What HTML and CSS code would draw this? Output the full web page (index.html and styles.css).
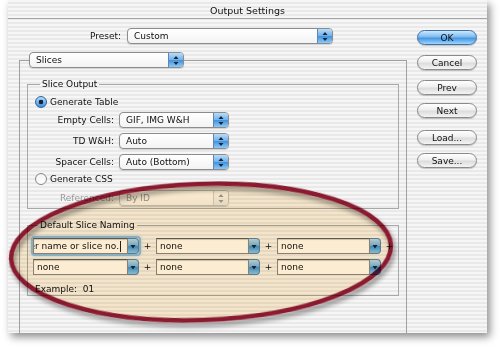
FILE: index.html
```html
<!DOCTYPE html>
<html lang="en">
<head>
    <meta charset="UTF-8">
    <title>Output Settings</title>
    <link rel="stylesheet" href="styles.css">
</head>
<body>

    <div class="window">
        <div class="titlebar">Output Settings</div>

        <div class="content">
            <div class="main">
                <!-- preset -->
                <div class="preset-row">
                    <span class="preset-label">Preset:</span>
                    <div class="popup preset-popup">
                        <span class="popup-text">Custom</span>
                        <span class="popup-arrows"><svg width="14" height="15" viewBox="0 0 14 15"><polygon points="4.5,6 9.5,6 7,3"/><polygon points="4.5,9 9.5,9 7,12"/></svg></span>
                    </div>
                </div>

                <div class="panel">
                    <div class="popup slices-popup">
                        <span class="popup-text">Slices</span>
                        <span class="popup-arrows"><svg width="14" height="15" viewBox="0 0 14 15"><polygon points="4.5,6 9.5,6 7,3"/><polygon points="4.5,9 9.5,9 7,12"/></svg></span>
                    </div>

                    <!-- Slice Output -->
                    <fieldset class="group output-group">
                        <legend>Slice Output</legend>

                        <div class="radio-row"><span class="radio checked"></span>Generate Table</div>

                        <div class="field-row">
                            <span class="field-label">Empty Cells:</span>
                            <div class="popup small-popup">
                                <span class="popup-text">GIF, IMG W&amp;H</span>
                                <span class="popup-arrows"><svg width="14" height="15" viewBox="0 0 14 15"><polygon points="4.5,6 9.5,6 7,3"/><polygon points="4.5,9 9.5,9 7,12"/></svg></span>
                            </div>
                        </div>
                        <div class="field-row">
                            <span class="field-label">TD W&amp;H:</span>
                            <div class="popup small-popup">
                                <span class="popup-text">Auto</span>
                                <span class="popup-arrows"><svg width="14" height="15" viewBox="0 0 14 15"><polygon points="4.5,6 9.5,6 7,3"/><polygon points="4.5,9 9.5,9 7,12"/></svg></span>
                            </div>
                        </div>
                        <div class="field-row">
                            <span class="field-label">Spacer Cells:</span>
                            <div class="popup small-popup">
                                <span class="popup-text">Auto (Bottom)</span>
                                <span class="popup-arrows"><svg width="14" height="15" viewBox="0 0 14 15"><polygon points="4.5,6 9.5,6 7,3"/><polygon points="4.5,9 9.5,9 7,12"/></svg></span>
                            </div>
                        </div>

                        <div class="radio-row css-row"><span class="radio"></span>Generate CSS</div>

                        <div class="field-row disabled">
                            <span class="field-label">Referenced:</span>
                            <div class="popup small-popup">
                                <span class="popup-text">By ID</span>
                                <span class="popup-arrows"><svg width="14" height="15" viewBox="0 0 14 15"><polygon points="4.5,6 9.5,6 7,3"/><polygon points="4.5,9 9.5,9 7,12"/></svg></span>
                            </div>
                        </div>
                    </fieldset>

                    <!-- Default Slice Naming -->
                    <fieldset class="group naming-group">
                        <legend>Default Slice Naming</legend>

                        <div class="combo-row">
                            <div class="combo focused">
                                <span class="combo-text scrolled"><span>layer name or slice no.</span><span class="caret"></span></span>
                                <span class="combo-button"><svg width="10" height="15" viewBox="0 0 10 15"><polygon points="2.5,6 7.5,6 5,9.5"/></svg></span>
                            </div>
                            <span class="plus">+</span>
                            <div class="combo">
                                <span class="combo-text">none</span>
                                <span class="combo-button"><svg width="10" height="15" viewBox="0 0 10 15"><polygon points="2.5,6 7.5,6 5,9.5"/></svg></span>
                            </div>
                            <span class="plus">+</span>
                            <div class="combo">
                                <span class="combo-text">none</span>
                                <span class="combo-button"><svg width="10" height="15" viewBox="0 0 10 15"><polygon points="2.5,6 7.5,6 5,9.5"/></svg></span>
                            </div>
                            <span class="plus">+</span>
                        </div>
                        <div class="combo-row">
                            <div class="combo">
                                <span class="combo-text">none</span>
                                <span class="combo-button"><svg width="10" height="15" viewBox="0 0 10 15"><polygon points="2.5,6 7.5,6 5,9.5"/></svg></span>
                            </div>
                            <span class="plus">+</span>
                            <div class="combo">
                                <span class="combo-text">none</span>
                                <span class="combo-button"><svg width="10" height="15" viewBox="0 0 10 15"><polygon points="2.5,6 7.5,6 5,9.5"/></svg></span>
                            </div>
                            <span class="plus">+</span>
                            <div class="combo">
                                <span class="combo-text">none</span>
                                <span class="combo-button"><svg width="10" height="15" viewBox="0 0 10 15"><polygon points="2.5,6 7.5,6 5,9.5"/></svg></span>
                            </div>
                        </div>

                        <div class="example">Example:&nbsp; 01</div>
                    </fieldset>
                </div>
            </div>

            <!-- buttons -->
            <div class="buttons">
                <button class="pill default">OK</button>
                <button class="pill">Cancel</button>
                <button class="pill prev">Prev</button>
                <button class="pill">Next</button>
                <button class="pill load">Load...</button>
                <button class="pill">Save...</button>
            </div>
        </div>
    </div>

    <!-- red ring annotation over the naming section -->
    <svg class="annotation" width="500" height="348" viewBox="0 0 500 348">
        <defs>
            <filter id="ringShadow" x="-10%" y="-30%" width="120%" height="160%">
                <feGaussianBlur in="SourceAlpha" stdDeviation="2.5"/>
                <feOffset dx="2" dy="4" result="blur"/>
                <feComponentTransfer><feFuncA type="linear" slope="0.45"/></feComponentTransfer>
                <feMerge><feMergeNode/><feMergeNode in="SourceGraphic"/></feMerge>
            </filter>
        </defs>
        <g transform="rotate(-2 201 252)">
            <ellipse class="ring-fill" cx="201" cy="252" rx="190" ry="68"/>
            <ellipse class="ring" cx="201" cy="252" rx="190" ry="68"/>
        </g>
    </svg>

</body>
</html>
```

FILE: styles.css
```css
body {
    margin: 0;
    width: 500px;
    height: 348px;
    position: relative;
    background: #fff;
    font-family: "DejaVu Sans", "Liberation Sans", sans-serif;
    font-size: 9px;
    color: #111;
    overflow: hidden;
}

.window {
    margin-left: 8px;
    width: 479px;
    height: 333px;
    overflow: hidden;
    background: repeating-linear-gradient(to bottom, #f6f6f6 0, #f6f6f6 2px, #e9e9e9 2px, #e9e9e9 4px);
    box-shadow: 3px 4px 8px rgba(0, 0, 0, 0.45);
}

.titlebar {
    height: 14px;
    padding-top: 4px;
    line-height: 14px;
    text-align: center;
    font-size: 9.5px;
    border-bottom: 1px solid #a4a4a4;
}

.content {
    display: flex;
    padding-left: 11px;
}

.main {
    width: 388px;
}

/* preset */
.preset-row {
    display: flex;
    align-items: center;
    margin-top: 9px;
}

.preset-label {
    width: 102px;
    text-align: right;
    margin-right: 6px;
}

.preset-popup {
    width: 206px;
    height: 17px;
}

.preset-popup .popup-text {
    line-height: 15px;
}

/* popups */
.popup {
    display: flex;
    height: 16px;
    border: 1px solid #8c8c8c;
    border-radius: 4px;
    background: linear-gradient(#ffffff, #f3f3f3);
    box-shadow: 0 1px 1px rgba(0, 0, 0, 0.15);
    overflow: hidden;
    box-sizing: border-box;
}

.popup-text {
    flex: 1;
    padding-left: 6px;
    line-height: 14px;
    white-space: nowrap;
}

.popup-arrows {
    width: 14px;
    border-left: 1px solid #5f86b6;
    background: linear-gradient(#b9dcf8, #6fb0ea 50%, #3f8fdc 50%, #8ccaf6);
}

.popup-arrows svg, .combo-button svg {
    display: block;
    fill: #13243c;
}

/* panel */
.panel {
    margin-top: 16px;
    height: 300px;
    border: 1px solid #a0a0a0;
}

.slices-popup {
    width: 155px;
    margin: -9px 0 0 9px;
}

/* groups */
.group {
    margin: 0 0 0 7px;
    width: 372px;
    box-sizing: border-box;
    border: 1px solid #a8a8a8;
    padding: 0 0 0 7px;
}

.group legend {
    margin-left: 5px;
    padding: 0 2px;
    line-height: 11px;
}

.output-group {
    margin-top: 11px;
    height: 130px;
}

.radio-row {
    display: flex;
    align-items: center;
    height: 12px;
    margin-top: 6px;
}

.radio {
    width: 10px;
    height: 10px;
    border-radius: 50%;
    border: 1px solid #858585;
    background: linear-gradient(#f2f2f2, #ffffff);
    margin-right: 3px;
}

.radio.checked {
    border-color: #31649c;
    background: radial-gradient(circle, #13243c 0, #13243c 2px, transparent 2.6px), linear-gradient(#b5dbf8, #3e8fdd);
}

.field-row {
    display: flex;
    align-items: center;
    margin-top: 4px;
}

.field-row + .field-row {
    margin-top: 5px;
}

.field-label {
    width: 79px;
    text-align: right;
    margin-right: 5px;
}

.small-popup {
    width: 110px;
}

.css-row {
    margin-top: 3px;
}

.field-row.disabled {
    color: #9a9a9a;
    margin-top: 5px;
}

.disabled .popup {
    border-color: #c2c2c2;
}

.disabled .popup-arrows {
    background: linear-gradient(#fafafa, #eaeaea);
    border-left-color: #cfcfcf;
}

.disabled svg {
    fill: #9a9a9a;
}

.naming-group {
    margin-top: 11px;
    height: 76px;
    padding-left: 5px;
}

.combo-row {
    display: flex;
    align-items: center;
    margin-top: 7px;
}

.combo-row + .combo-row {
    margin-top: 5px;
}

.combo {
    display: flex;
    width: 104px;
    height: 16px;
}

.combo:first-child {
    width: 106px;
}

.combo-text {
    flex: 1;
    min-width: 0;
    background: #fff;
    border: 1px solid #8a8a8a;
    border-top-color: #5e5e5e;
    box-shadow: inset 0 1px 1px rgba(0, 0, 0, 0.2);
    padding-left: 3px;
    line-height: 14px;
    white-space: nowrap;
    overflow: hidden;
}

.combo-text.scrolled {
    display: flex;
    justify-content: flex-end;
    padding-right: 6px;
}

.caret {
    flex: none;
    width: 1px;
    height: 11px;
    margin: 2px 0 0 1px;
    background: #222;
}

.combo-button {
    width: 10px;
    border: 1px solid #5a83b3;
    border-left: none;
    border-radius: 0 4px 4px 0;
    background: linear-gradient(#b9dcf8, #6fb0ea 50%, #3f8fdc 50%, #8ccaf6);
}

.combo.focused {
    box-shadow: 0 0 0 2px #8bbbe8, 0 0 3px 2px #a9cff0;
    border-radius: 2px;
}

.plus {
    width: 17px;
    text-align: center;
}

.example {
    margin-top: 9px;
    padding-left: 2px;
}

/* buttons */
.buttons {
    display: flex;
    flex-direction: column;
    margin-left: 10px;
    padding-top: 11px;
}

.pill {
    width: 60px;
    height: 15px;
    padding: 0;
    border: 1px solid #8a8a8a;
    border-radius: 8px;
    font-family: inherit;
    font-size: 9px;
    color: #111;
    background: linear-gradient(#ffffff, #efefef 45%, #dcdcdc 55%, #f4f4f4);
    box-shadow: 0 1px 1px rgba(0, 0, 0, 0.2);
    margin-bottom: 10px;
}

.pill.default {
    border-color: #3f6fa6;
    background: linear-gradient(#cde8fc, #7cbcf0 45%, #4495e2 55%, #9dd6fb);
}

.pill.load {
    margin-top: 2px;
}

.pill:nth-child(3) {
    margin-bottom: 8px;
}

.pill:nth-child(5) {
    margin-bottom: 8px;
}

/* annotation */
.annotation {
    position: absolute;
    left: 0;
    top: 0;
    pointer-events: none;
    mix-blend-mode: multiply;
}

.ring-fill {
    fill: #fcedd2;
}

.ring {
    fill: none;
    stroke: #931a30;
    stroke-width: 4.5;
    filter: url(#ringShadow);
}
```
